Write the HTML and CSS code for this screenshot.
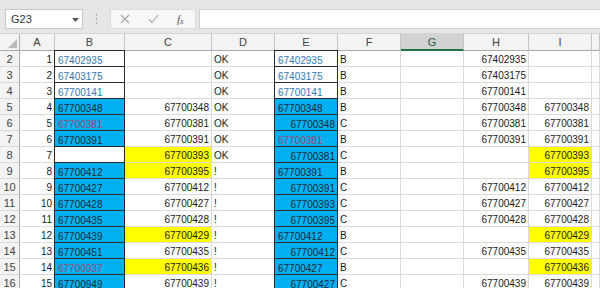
FILE: index.html
```html
<!DOCTYPE html>
<html>
<head>
<meta charset="utf-8">
<link rel="stylesheet" href="styles.css">
</head>
<body>
<div class="app">
  <div class="toolbar">
    <div class="namebox"><span class="nb-text">G23</span><svg class="caret" width="7" height="4" viewBox="0 0 7 4"><path d="M0 0h7L3.5 4z" fill="#555"/></svg></div>
    <div class="grip"><i></i><i></i><i></i></div>
    <div class="fbtns">
      <svg class="ic" width="10" height="10" viewBox="0 0 10 10"><path d="M1 1L9 9M9 1L1 9" stroke="#a8a8a8" stroke-width="1.1" fill="none"/></svg>
      <svg class="ic" width="11" height="10" viewBox="0 0 11 10"><path d="M1 5.5L4 8.5L10 1" stroke="#a8a8a8" stroke-width="1.1" fill="none"/></svg>
      <span class="fx">f<sub>x</sub></span>
    </div>
    <div class="finput"></div>
  </div>
  <div class="sheet">
    <div class="corner"><svg width="9" height="9" viewBox="0 0 9 9"><path d="M9 0V9H0z" fill="#b9b9b9"/></svg></div>
    <div class="ch">A</div><div class="ch">B</div><div class="ch">C</div><div class="ch">D</div><div class="ch">E</div><div class="ch">F</div><div class="ch sel">G</div><div class="ch">H</div><div class="ch">I</div><div class="ch"></div>

    <div class="rh">2</div><div class="c r">1</div><div class="c bx lk">67402935</div><div class="c"></div><div class="c">OK</div><div class="c bx lk">67402935</div><div class="c">B</div><div class="c"></div><div class="c r">67402935</div><div class="c"></div><div class="c"></div>
    <div class="rh">3</div><div class="c r">2</div><div class="c bx lk">67403175</div><div class="c"></div><div class="c">OK</div><div class="c bx lk">67403175</div><div class="c">B</div><div class="c"></div><div class="c r">67403175</div><div class="c"></div><div class="c"></div>
    <div class="rh">4</div><div class="c r">3</div><div class="c bx lk">67700141</div><div class="c"></div><div class="c">OK</div><div class="c bx lk">67700141</div><div class="c">B</div><div class="c"></div><div class="c r">67700141</div><div class="c"></div><div class="c"></div>
    <div class="rh">5</div><div class="c r">4</div><div class="c bx bl">67700348</div><div class="c r">67700348</div><div class="c">OK</div><div class="c bx bl">67700348</div><div class="c">B</div><div class="c"></div><div class="c r">67700348</div><div class="c r">67700348</div><div class="c"></div>
    <div class="rh">6</div><div class="c r">5</div><div class="c bx bl rd">67700381</div><div class="c r">67700381</div><div class="c">OK</div><div class="c bx bl r">67700348</div><div class="c">C</div><div class="c"></div><div class="c r">67700381</div><div class="c r">67700381</div><div class="c"></div>
    <div class="rh">7</div><div class="c r">6</div><div class="c bx bl">67700391</div><div class="c r">67700391</div><div class="c">OK</div><div class="c bx bl rd">67700381</div><div class="c">B</div><div class="c"></div><div class="c r">67700391</div><div class="c r">67700391</div><div class="c"></div>
    <div class="rh">8</div><div class="c r">7</div><div class="c bx"></div><div class="c r yl">67700393</div><div class="c">OK</div><div class="c bx bl r">67700381</div><div class="c">C</div><div class="c"></div><div class="c r"></div><div class="c r yl">67700393</div><div class="c"></div>
    <div class="rh">9</div><div class="c r">8</div><div class="c bx bl">67700412</div><div class="c r yl">67700395</div><div class="c">!</div><div class="c bx bl">67700391</div><div class="c">B</div><div class="c"></div><div class="c r"></div><div class="c r yl">67700395</div><div class="c"></div>
    <div class="rh">10</div><div class="c r">9</div><div class="c bx bl">67700427</div><div class="c r">67700412</div><div class="c">!</div><div class="c bx bl r">67700391</div><div class="c">C</div><div class="c"></div><div class="c r">67700412</div><div class="c r">67700412</div><div class="c"></div>
    <div class="rh">11</div><div class="c r">10</div><div class="c bx bl">67700428</div><div class="c r">67700427</div><div class="c">!</div><div class="c bx bl r">67700393</div><div class="c">C</div><div class="c"></div><div class="c r">67700427</div><div class="c r">67700427</div><div class="c"></div>
    <div class="rh">12</div><div class="c r">11</div><div class="c bx bl">67700435</div><div class="c r">67700428</div><div class="c">!</div><div class="c bx bl r">67700395</div><div class="c">C</div><div class="c"></div><div class="c r">67700428</div><div class="c r">67700428</div><div class="c"></div>
    <div class="rh">13</div><div class="c r">12</div><div class="c bx bl">67700439</div><div class="c r yl">67700429</div><div class="c">!</div><div class="c bx bl">67700412</div><div class="c">B</div><div class="c"></div><div class="c r"></div><div class="c r yl">67700429</div><div class="c"></div>
    <div class="rh">14</div><div class="c r">13</div><div class="c bx bl">67700451</div><div class="c r">67700435</div><div class="c">!</div><div class="c bx bl r">67700412</div><div class="c">C</div><div class="c"></div><div class="c r">67700435</div><div class="c r">67700435</div><div class="c"></div>
    <div class="rh">15</div><div class="c r">14</div><div class="c bx bl rd">67700937</div><div class="c r yl">67700436</div><div class="c">!</div><div class="c bx bl">67700427</div><div class="c">B</div><div class="c"></div><div class="c r"></div><div class="c r yl">67700436</div><div class="c"></div>
    <div class="rh">16</div><div class="c r">15</div><div class="c bx bl">67700949</div><div class="c r">67700439</div><div class="c">!</div><div class="c bx bl r">67700427</div><div class="c">C</div><div class="c"></div><div class="c r">67700439</div><div class="c r">67700439</div><div class="c"></div>
  </div>
</div>
</body>
</html>
```
FILE: styles.css
```css
* { box-sizing: border-box; }
html, body { margin: 0; padding: 0; background: #fff; }
body { font-family: "Liberation Sans", Arial, sans-serif; font-size: 10px; color: #1a1a1a; overflow: hidden; }
.app { width: 600px; height: 288px; overflow: hidden; }

.toolbar {
  height: 34px;
  background: #e6e6e6;
  display: flex;
  align-items: flex-start;
  padding-top: 9px;
  border-bottom: 1px solid #d4d4d4;
}
.namebox {
  margin-left: 5px;
  width: 78px;
  height: 20px;
  background: #fff;
  border: 1px solid #c6c6c6;
  display: flex;
  align-items: center;
  justify-content: space-between;
  padding: 0 3px 0 5px;
  font-size: 11px;
  color: #333;
}
.caret { margin-top: 1px; }
.grip {
  width: 27px;
  height: 20px;
  display: flex;
  flex-direction: column;
  align-items: center;
  justify-content: center;
  gap: 2px;
}
.grip i { display: block; width: 1px; height: 2px; background: #b0b0b0; }
.fbtns {
  width: 86px;
  height: 20px;
  background: #f7f7f7;
  border: 1px solid #dcdcdc;
  display: flex;
  align-items: center;
  padding-left: 9px;
  gap: 18px;
}
.fx { font-family: "Liberation Serif", serif; font-style: italic; font-size: 11px; color: #555; }
.fx sub { font-size: 8px; vertical-align: -1px; }
.finput {
  margin-left: 3px;
  flex: 1;
  height: 20px;
  background: #fff;
  border: 1px solid #d0d0d0;
  border-right: none;
}

.sheet {
  display: grid;
  grid-template-columns: 20px 35px 70px 87px 63px 63px 63px 63px 65px 63px 1fr;
  grid-template-rows: 17px;
  grid-auto-rows: 16px;
}
.corner {
  background: #f3f3f3;
  border-right: 1px solid #ababab;
  border-bottom: 1px solid #ababab;
  display: flex;
  align-items: flex-end;
  justify-content: flex-end;
  padding: 0 2px 2px 0;
}
.ch {
  background: #f3f3f3;
  border-right: 1px solid #c4c4c4;
  border-bottom: 1px solid #ababab;
  text-align: center;
  color: #444;
  font-size: 11px;
  line-height: 16px;
}
.ch.sel {
  background: #d2d2d2;
  border-bottom: 2px solid #217346;
  color: #2b5e3f;
}
.rh {
  background: #f3f3f3;
  border-right: 1px solid #ababab;
  border-bottom: 1px solid #dadada;
  text-align: center;
  color: #444;
  font-size: 11px;
  line-height: 16px;
}
.c {
  border-right: 1px solid #dadada;
  border-bottom: 1px solid #dadada;
  padding: 3px 2px 0 2px;
  line-height: 12px;
  white-space: nowrap;
  overflow: hidden;
  color: #1a1a1a;
}
.c.r { text-align: right; }
.c.bx {
  border: 1px solid #2a2a2a;
  margin: -1px 0 0 -1px;
  padding-top: 4px;
  padding-left: 3px;
}
.c.bl { background: #00b0f0; color: #1a2a36; }
.c.yl { background: #ffff00; }
.c.lk { color: #2f78b7; }
.c.rd { color: #9c4a78; }
```
